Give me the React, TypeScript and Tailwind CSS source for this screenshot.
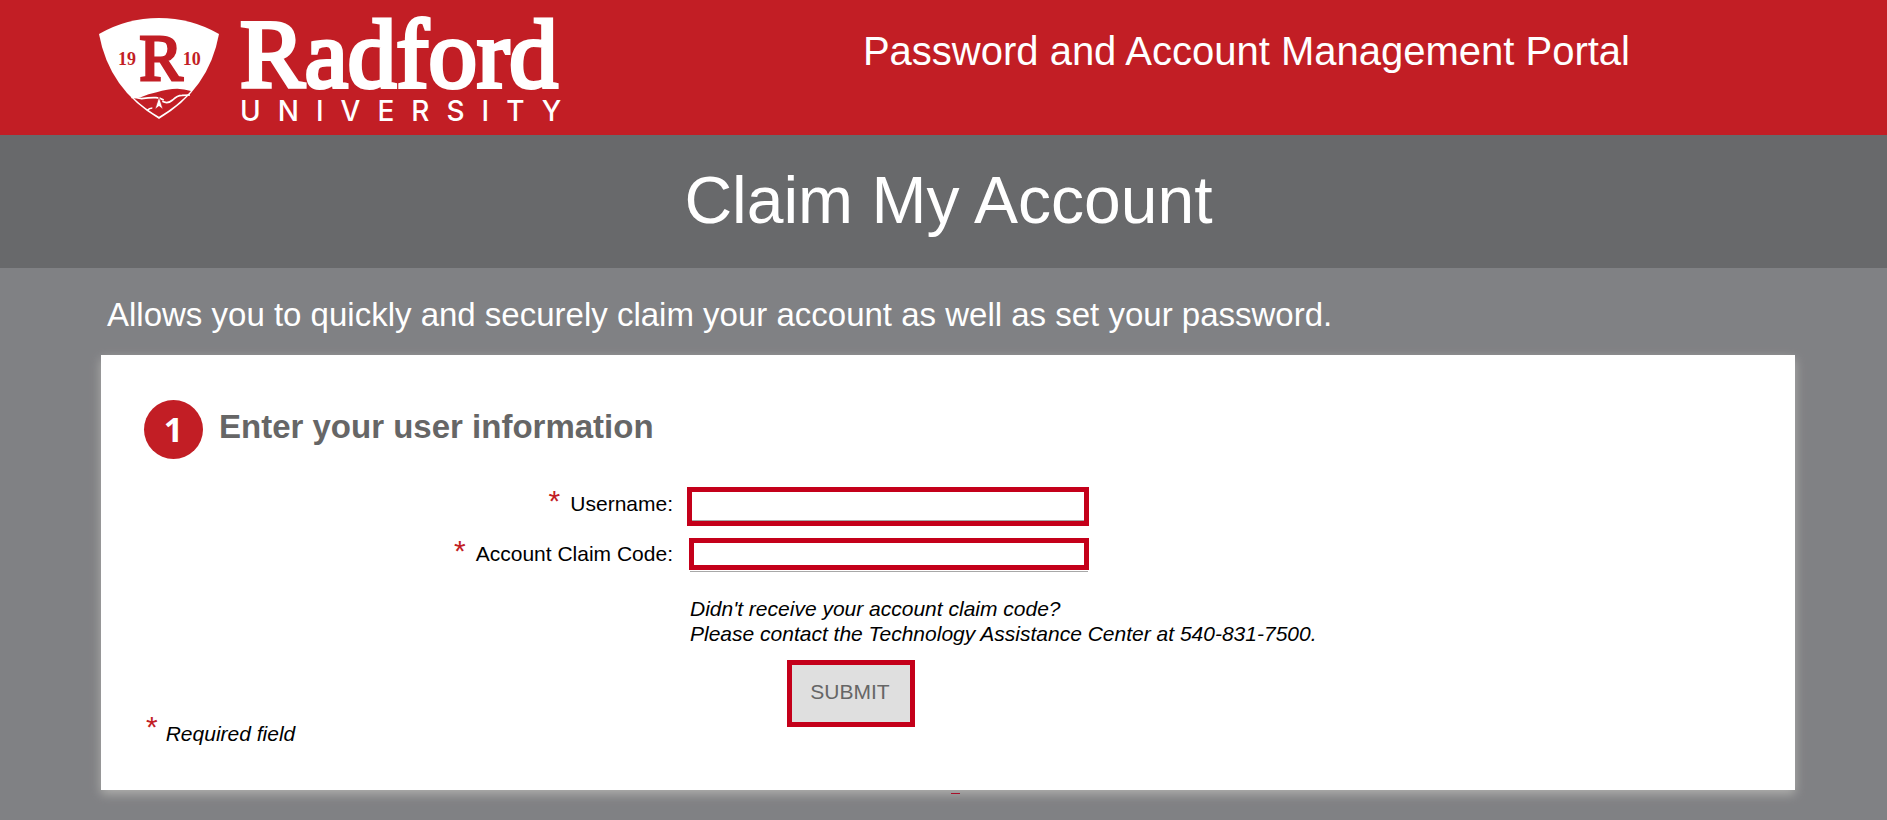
import React from "react";

function Shield() {
  return (
    <svg viewBox="24 21 366 309" className="h-[103px] w-[122px] shrink-0" aria-hidden="true">
      <path d="M27 72Q110 24 207 24Q304 24 387 72Q357 238 207 327Q57 238 27 72Z" fill="#fff" />
      <g fill="#c21e25" fontFamily="Liberation Serif, serif">
        <text x="213" y="209" fontSize="194" textAnchor="middle" stroke="#c21e25" strokeWidth="9">R</text>
        <text x="111" y="164" fontSize="54" fontWeight="700" textAnchor="middle">19</text>
        <text x="305" y="164" fontSize="54" fontWeight="700" textAnchor="middle">10</text>
      </g>
      <path
        d="M131 264Q142 263 152 262Q176 251 200 247Q232 236 262 236Q282 237 303 243Q261 289 207 320Q167 298 131 264Z"
        fill="#c21e25"
      />
      <path
        d="M124 262Q140 262 155 266Q180 262 198 263Q211 264 221 270M217 274Q233 283 248 270Q262 256 276 256L300 255M172 301Q178 294 187 294"
        fill="none"
        stroke="#fff"
        strokeWidth="5"
      />
      <path d="M207 260L219 298L207 289L195 298Z" fill="#fff" stroke="#c21e25" strokeWidth="2" />
    </svg>
  );
}

function Logo() {
  return (
    <a href="#" aria-label="Radford University" className="flex items-start gap-5 text-white">
      <Shield />
      <span className="flex flex-col">
        <span className="font-['Liberation_Serif',serif] text-[97px] leading-[76px] [-webkit-text-stroke:4px_white]">Radford</span>
        <span className="mt-1 font-[Inter,sans-serif] text-[28px] leading-7 font-medium tracking-[17px]">UNIVERSITY</span>
      </span>
    </a>
  );
}

function Star() {
  return <span className="text-[30px] leading-5 text-[#c21e25] not-italic">*</span>;
}

export default function App() {
  return (
    <div className="min-h-screen bg-[#808184] font-['Liberation_Sans',Arial,sans-serif] text-black">
      <header className="flex h-[135px] items-start justify-between bg-[#c21e25] pt-[17px] pr-[257px] pl-[98px]">
        <Logo />
        <p className="pt-[11px] text-[40px] leading-[46px] text-white">Password and Account Management Portal</p>
      </header>
      <div className="bg-[#68696b] pt-[27px] pb-[30px] pl-[10px] text-center">
        <h1 className="text-[66px] leading-[76px] text-white">Claim My Account</h1>
      </div>
      <main className="pr-[92px] pb-[26px] pl-[101px]">
        <p className="px-[6px] pt-7 pb-[21px] text-[33px] leading-[38px] text-white">
          Allows you to quickly and securely claim your account as well as set your password.
        </p>
        <section className="bg-white px-[43px] pt-[45px] pb-11 shadow-[0_4px_10px_#b0b0ae]">
          <div className="flex items-center gap-4">
            <span className="flex size-[59px] items-center justify-center rounded-full bg-[#c21e25] pb-[2px] font-['Noto_Sans',sans-serif] text-[34px] leading-none font-bold text-white">
              1
            </span>
            <h2 className="pb-[6px] text-[33px] leading-[38px] font-bold text-[#666]">Enter your user information</h2>
          </div>
          <form className="pt-7 text-[21px] leading-[25px]" onSubmit={(e) => e.preventDefault()}>
            <div className="grid grid-cols-[529px_1fr] items-start gap-x-[14px] gap-y-3">
              <label htmlFor="username" className="flex items-baseline justify-end gap-[10px] pt-1">
                <Star />
                Username:
              </label>
              <input
                id="username"
                className="h-[39px] w-[402px] border-5 border-[#c4001a] px-2 shadow-[inset_0_-1px_0_#a8a8a8] outline-none"
              />
              <label htmlFor="code" className="flex items-baseline justify-end gap-[10px] pt-[3px]">
                <Star />
                Account Claim Code:
              </label>
              <input
                id="code"
                className="ml-[2px] h-8 w-[400px] border-5 border-[#c4001a] px-2 shadow-[0_2px_0_-1px_#fff,0_3px_0_-1px_#a8a8a8] outline-none"
              />
            </div>
            <p className="pt-[26px] pl-[546px] italic">
              Didn't receive your account claim code?
              <br />
              Please contact the Technology Assistance Center at 540-831-7500.
            </p>
            <div className="pt-[14px] pl-[643px]">
              <button type="submit" className="h-[67px] w-[128px] border-5 border-[#c4001a] bg-[#dfdfdf] pr-[2px] pb-1 text-[#666]">
                SUBMIT
              </button>
            </div>
          </form>
          <p className="-mt-[10px] flex items-start gap-2 px-[2px] text-[21px] leading-[25px]">
            <Star />
            <em className="pt-1">Required field</em>
          </p>
        </section>
        <div className="mt-[3px] ml-[calc(50%+3px)] h-px w-[9px] bg-[#a8102a]" />
      </main>
    </div>
  );
}
